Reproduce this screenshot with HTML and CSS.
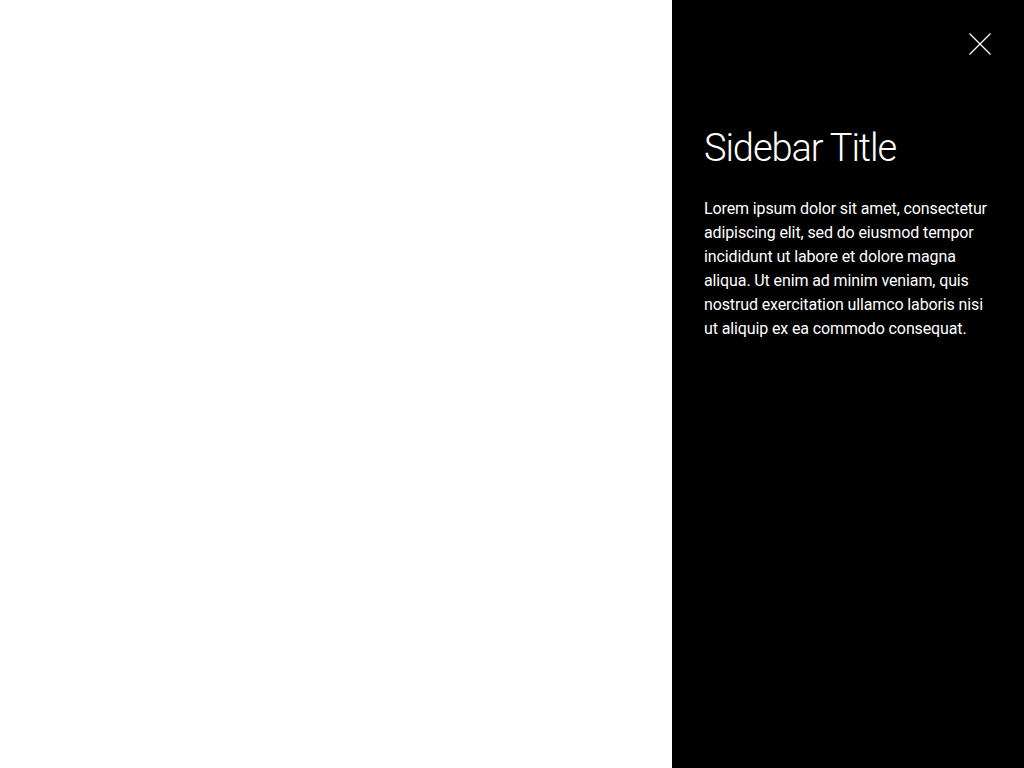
FILE: index.html
```html
<!DOCTYPE html>
<html>
<head>
<meta charset="utf-8">
<link rel="stylesheet" href="styles.css">
</head>
<body>
<div class="page">
  <main class="main"></main>
  <aside class="sidebar">
    <div class="sidebar-head">
      <button class="close" aria-label="Close">
        <svg width="24" height="24" viewBox="0 0 24 24"><path d="M1.5 1.5 L22.5 22.5 M22.5 1.5 L1.5 22.5" stroke="#fff" stroke-width="1.3" fill="none"/></svg>
      </button>
    </div>
    <h1 class="title">Sidebar Title</h1>
    <p class="text">Lorem ipsum dolor sit amet, consectetur adipiscing elit, sed do eiusmod tempor incididunt ut labore et dolore magna aliqua. Ut enim ad minim veniam, quis nostrud exercitation ullamco laboris nisi ut aliquip ex ea commodo consequat.</p>
  </aside>
</div>
</body>
</html>
```
FILE: styles.css
```css
html, body {
  margin: 0;
  padding: 0;
  height: 100%;
}
body {
  font-family: Roboto, "Liberation Sans", sans-serif;
  background: #fff;
}
.page {
  display: flex;
  height: 768px;
}
.main {
  flex: 1;
  background: #fff;
}
.sidebar {
  width: 352px;
  box-sizing: border-box;
  padding: 32px;
  background: #000;
  color: #fff;
  display: flex;
  flex-direction: column;
}
.sidebar-head {
  display: flex;
  justify-content: flex-end;
}
.close {
  width: 24px;
  height: 24px;
  padding: 0;
  margin: 0;
  border: 0;
  background: none;
  display: block;
  cursor: pointer;
}
.close svg {
  display: block;
}
.title {
  margin: 68px 0 0;
  font-size: 38px;
  line-height: 48px;
  font-weight: 300;
  letter-spacing: -1.1px;
}
.text {
  margin: 25px 0 0;
  font-size: 16px;
  line-height: 24px;
  font-weight: 400;
  letter-spacing: -0.12px;
}
```
